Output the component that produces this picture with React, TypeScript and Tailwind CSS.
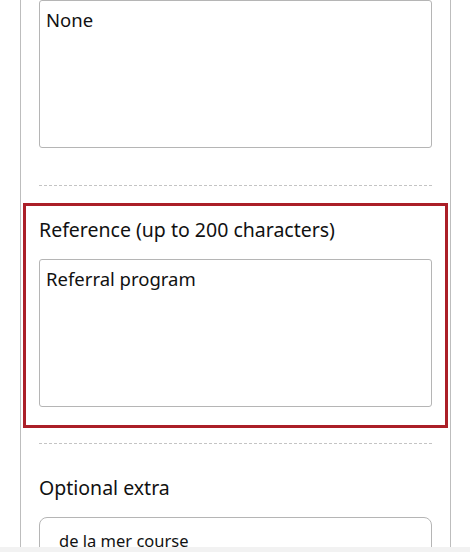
import React from "react";

export default function App() {
  const font = { fontFamily: '"Noto Sans", "Open Sans", sans-serif' };
  return (
    <div className="relative w-[470px] h-[552px] overflow-hidden bg-white text-[#111]" style={font}>
      <div className="ml-[20px] w-[431px] border-x border-[#bdbdbd] px-[18px] pb-10">
        <div className="h-[148px] rounded-[3px] border border-[#b5b5b5] px-[6px] pt-[7px] text-[18.5px] leading-[24px]">
          None
        </div>
        <div className="mt-[37px] border-t border-dashed border-[#c4c4c4]" />
        <div className="mx-[-16px] mt-[17px] border-[3px] border-[#ab1f28] px-[13px] pt-[11px] pb-[18px]">
          <div className="text-[19.5px] leading-[26px]">Reference (up to 200 characters)</div>
          <div className="mt-[16px] h-[148px] rounded-[3px] border border-[#b5b5b5] px-[6px] pt-[7px] text-[18.5px] leading-[24px]">
            Referral program
          </div>
        </div>
        <div className="mt-[15px] border-t border-dashed border-[#c4c4c4]" />
        <div className="mt-[31px] text-[19.5px] leading-[26px]">Optional extra</div>
        <div className="mt-[16px] h-[50px] rounded-[8px] border border-[#b5b5b5] px-[19px] pt-[12px] text-[16.5px] leading-[22px]">
          de la mer course
        </div>
      </div>
      <div className="absolute bottom-0 left-0 right-0 h-[5px] bg-[#f2f2f2]" />
    </div>
  );
}
